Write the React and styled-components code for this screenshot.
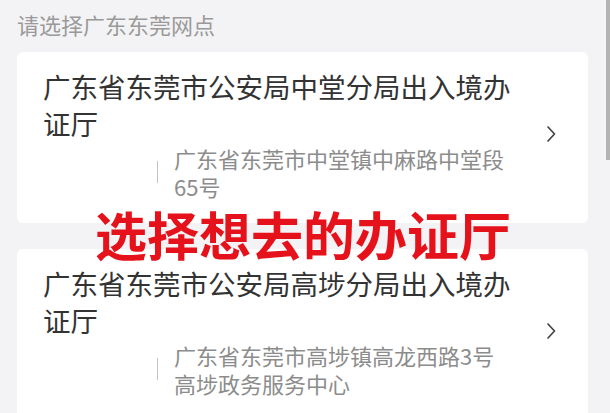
import React from 'react';
import styled, {createGlobalStyle} from 'styled-components';

const offices = [
  {
    name: '广东省东莞市公安局中堂分局出入境办证厅',
    address: '广东省东莞市中堂镇中麻路中堂段65号',
  },
  {
    name: '广东省东莞市公安局高埗分局出入境办证厅',
    address: '广东省东莞市高埗镇高龙西路3号高埗政务服务中心',
  },
];

const Chevron = () => (
  <svg width="10" height="18" viewBox="0 0 10 18">
    <path d="M2 2 L8.5 9 L2 16" fill="none" stroke="#444" strokeWidth="1.7" strokeLinecap="round" strokeLinejoin="round"/>
  </svg>
);

const OfficeCard = ({office}) => (
  <Card>
    <CardBody>
      <Title>{office.name}</Title>
      <AddressRow>
        <Divider/>
        <Address>{office.address}</Address>
      </AddressRow>
    </CardBody>
    <Arrow>
      <Chevron/>
    </Arrow>
  </Card>
);

const App = () => (
  <Page>
    <GlobalStyle/>
    <Heading>请选择广东东莞网点</Heading>
    <CardList>
      {offices.map((o, i) => <OfficeCard key={i} office={o}/>)}
    </CardList>
    <Banner>选择想去的办证厅</Banner>
    <ScrollThumb/>
  </Page>
);

export default App;

const GlobalStyle = createGlobalStyle`
  html, body {
    margin: 0;
    background: #f3f3f5;
    overflow: hidden;
  }
  body {
    font-family: "Noto Sans CJK SC", "Noto Sans", sans-serif;
  }
`;

const Page = styled.div`
  position: relative;
  height: 413px;
  padding: 10px 22px 0 17px;
  box-sizing: border-box;
  overflow: hidden;
`;

const Heading = styled.div`
  font-size: 22px;
  line-height: 28px;
  color: #9a9a9a;
  margin-bottom: 14px;
`;

const CardList = styled.div`
  display: flex;
  flex-direction: column;
  gap: 26px;
`;

const Card = styled.div`
  display: flex;
  align-items: center;
  background: #fff;
  border-radius: 6px;
  padding: 16px 32px 23px 26px;
`;

const CardBody = styled.div`
  flex: 1;
`;

const Title = styled.div`
  max-width: 485px;
  font-size: 27.5px;
  line-height: 37px;
  color: #333;
`;

const AddressRow = styled.div`
  display: flex;
  align-items: center;
  margin-top: 2px;
  padding-left: 114px;
`;

const Divider = styled.div`
  width: 1px;
  height: 22px;
  background: #c4c4c4;
  margin-right: 16px;
  flex-shrink: 0;
`;

const Address = styled.div`
  width: 340px;
  font-size: 22px;
  line-height: 28px;
  color: #8c8c8c;
`;

const Arrow = styled.div`
  display: flex;
  align-items: center;
`;

const Banner = styled.div`
  position: absolute;
  left: 95px;
  top: 206px;
  font-size: 52px;
  line-height: 56px;
  font-weight: 700;
  color: #e5121b;
  white-space: nowrap;
`;

const ScrollThumb = styled.div`
  position: absolute;
  right: 0;
  top: 0;
  width: 4px;
  height: 160px;
  background: #b3b3b3;
`;
